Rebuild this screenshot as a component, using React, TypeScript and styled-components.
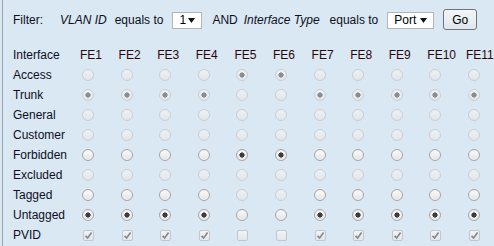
import React from 'react';
import styled, { createGlobalStyle } from 'styled-components';

const GlobalStyle = createGlobalStyle`
  html, body {
    margin: 0;
    padding: 0;
    background: #d9e8f2;
  }
  body {
    font-family: "Liberation Sans", Arial, sans-serif;
    font-size: 12px;
    color: #0e0e1c;
  }
`;

// Data
const PORTS = ['FE1', 'FE2', 'FE3', 'FE4', 'FE5', 'FE6', 'FE7', 'FE8', 'FE9', 'FE10', 'FE11'];

interface MemberRow {
  label: string;
  kind: 'radio' | 'check';
  checked: number[];
  enabled: number[];
}

const ALL = PORTS.map((_, i) => i + 1);
const EXCEPT_56 = ALL.filter((n) => n !== 5 && n !== 6);

const ROWS: MemberRow[] = [
  { label: 'Access', kind: 'radio', checked: [5, 6], enabled: [] },
  { label: 'Trunk', kind: 'radio', checked: EXCEPT_56, enabled: [] },
  { label: 'General', kind: 'radio', checked: [], enabled: [] },
  { label: 'Customer', kind: 'radio', checked: [], enabled: [] },
  { label: 'Forbidden', kind: 'radio', checked: [5, 6], enabled: ALL },
  { label: 'Excluded', kind: 'radio', checked: [], enabled: [] },
  { label: 'Tagged', kind: 'radio', checked: [], enabled: EXCEPT_56 },
  { label: 'Untagged', kind: 'radio', checked: EXCEPT_56, enabled: ALL },
  { label: 'PVID', kind: 'check', checked: EXCEPT_56, enabled: [] },
];

const App: React.FC = () => {
  return (
    <>
      <GlobalStyle />
      <Page>
        <FilterBar>
          <Text>Filter:</Text>
          <Field $ml={17}>VLAN ID</Field>
          <Text $ml={8}>equals to</Text>
          <SelectBox $ml={9} $w={30}>
            <span>1</span>
            <Arrow />
          </SelectBox>
          <Text $ml={10}>AND</Text>
          <Field $ml={6}>Interface Type</Field>
          <Text $ml={10}>equals to</Text>
          <SelectBox $ml={9} $w={47}>
            <span>Port</span>
            <Arrow />
          </SelectBox>
          <GoButton type="button">Go</GoButton>
        </FilterBar>

        <MemberGrid>
          <RowLabel>Interface</RowLabel>
          {PORTS.map((p) => (
            <PortHead key={p}>{p}</PortHead>
          ))}
          {ROWS.map((row) => (
            <React.Fragment key={row.label}>
              <RowLabel>{row.label}</RowLabel>
              {PORTS.map((p, i) => {
                const n = i + 1;
                const on = row.checked.includes(n);
                const off = !row.enabled.includes(n);
                return (
                  <Cell key={p}>
                    {row.kind === 'radio' ? (
                      <Radio role="radio" aria-checked={on} aria-disabled={off} $checked={on} $disabled={off} />
                    ) : (
                      <Check role="checkbox" aria-checked={on} aria-disabled={off} $disabled={off}>
                        {on && (
                          <svg width="9" height="9" viewBox="0 0 9 9">
                            <path d="M1.5 4.8 L3.6 7 L7.6 1.6" fill="none" stroke="currentColor" strokeWidth="1.7" />
                          </svg>
                        )}
                      </Check>
                    )}
                  </Cell>
                );
              })}
            </React.Fragment>
          ))}
        </MemberGrid>
      </Page>
    </>
  );
};

const Arrow: React.FC = () => (
  <svg width="7" height="5" viewBox="0 0 7 5">
    <polygon points="0,0 7,0 3.5,5" fill="#111" />
  </svg>
);

export default App;

// Styled components
const Page = styled.div`
  margin-left: 2px;
  min-height: 246px;
  border-left: 1px solid #9aa4ad;
  padding: 9px 0 0 10px;
  box-sizing: border-box;
`;

const FilterBar = styled.div`
  display: flex;
  align-items: center;
  height: 21px;
  white-space: nowrap;
`;

const Text = styled.span<{ $ml?: number }>`
  margin-left: ${(p) => p.$ml ?? 0}px;
  color: #0e0e1c;
`;

const Field = styled(Text)`
  font-style: italic;
`;

const SelectBox = styled.span<{ $ml: number; $w: number }>`
  margin-left: ${(p) => p.$ml}px;
  width: ${(p) => p.$w}px;
  flex: none;
  height: 17px;
  box-sizing: border-box;
  display: flex;
  align-items: center;
  justify-content: space-between;
  padding: 0 6px;
  background: #fff;
  border: 1px solid #b4b4b4;
  color: #000;
  font-size: 12px;
  margin-top: 1px;
`;

const GoButton = styled.button`
  margin-left: 9px;
  width: 34px;
  height: 21px;
  padding: 0;
  border: 1px solid #6f747a;
  border-radius: 3px;
  background: linear-gradient(#f4f6f8, #dfe6ec);
  font-family: inherit;
  font-size: 12px;
  color: #000;
`;

const MemberGrid = styled.div`
  margin-top: 15px;
  display: grid;
  grid-template-columns: 67px repeat(11, 38.6px);
  grid-auto-rows: 20px;
  align-items: center;
  white-space: nowrap;
`;

const RowLabel = styled.div`
  color: #0e0e24;
`;

const PortHead = styled.div`
  color: #2e0509;
`;

const Cell = styled.div`
  display: flex;
  align-items: center;
  padding-left: 2px;
`;

const Radio = styled.span<{ $checked: boolean; $disabled: boolean }>`
  width: 12px;
  height: 12px;
  box-sizing: border-box;
  border-radius: 50%;
  border: 1px solid ${(p) => (p.$disabled ? '#c9ced3' : '#a3a5a8')};
  background: ${(p) => {
    const dot = p.$disabled ? '#8a8d90' : '#3c3c3c';
    const fill = p.$disabled ? 'linear-gradient(#eef1f4, #e2e6ea)' : 'linear-gradient(#fbfbfb, #e3e3e3)';
    return p.$checked ? `radial-gradient(circle, ${dot} 0 2.3px, transparent 2.9px), ${fill}` : fill;
  }};
  box-shadow: ${(p) => (p.$disabled ? 'none' : 'inset 0 0 0 1px #f4f0f0')};
`;

const Check = styled.span<{ $disabled: boolean }>`
  width: 11px;
  height: 11px;
  box-sizing: border-box;
  margin-left: 1px;
  border-radius: 2px;
  border: 1px solid #c3c7cb;
  background: linear-gradient(#f1f3f5, #e4e8eb);
  color: ${(p) => (p.$disabled ? '#86898c' : '#333')};
  display: flex;
  align-items: center;
  justify-content: center;
`;
